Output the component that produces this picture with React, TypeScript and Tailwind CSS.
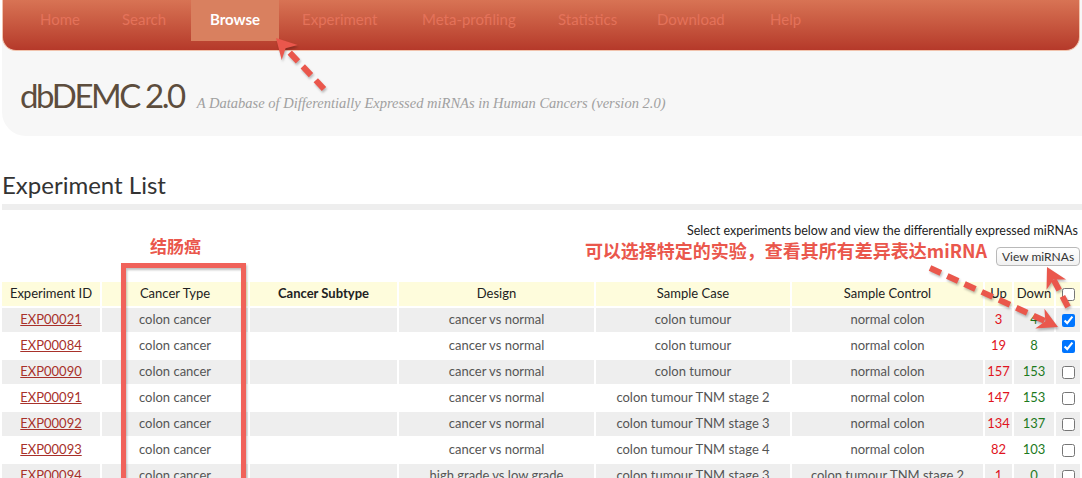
import React from "react";

type Row = {
  id: string;
  type: string;
  sub: string;
  design: string;
  sampleCase: string;
  control: string;
  up: string;
  down: string;
  checked: boolean;
};

const rows: Row[] = [
  { id: "EXP00021", type: "colon cancer", sub: "", design: "cancer vs normal", sampleCase: "colon tumour", control: "normal colon", up: "3", down: "4", checked: true },
  { id: "EXP00084", type: "colon cancer", sub: "", design: "cancer vs normal", sampleCase: "colon tumour", control: "normal colon", up: "19", down: "8", checked: true },
  { id: "EXP00090", type: "colon cancer", sub: "", design: "cancer vs normal", sampleCase: "colon tumour", control: "normal colon", up: "157", down: "153", checked: false },
  { id: "EXP00091", type: "colon cancer", sub: "", design: "cancer vs normal", sampleCase: "colon tumour TNM stage 2", control: "normal colon", up: "147", down: "153", checked: false },
  { id: "EXP00092", type: "colon cancer", sub: "", design: "cancer vs normal", sampleCase: "colon tumour TNM stage 3", control: "normal colon", up: "134", down: "137", checked: false },
  { id: "EXP00093", type: "colon cancer", sub: "", design: "cancer vs normal", sampleCase: "colon tumour TNM stage 4", control: "normal colon", up: "82", down: "103", checked: false },
  { id: "EXP00094", type: "colon cancer", sub: "", design: "high grade vs low grade", sampleCase: "colon tumour TNM stage 3", control: "colon tumour TNM stage 2", up: "1", down: "0", checked: false },
];

function Arrow({ x1, y1, x2, y2 }: { x1: number; y1: number; x2: number; y2: number }) {
  const dx = x2 - x1;
  const dy = y2 - y1;
  const len = Math.sqrt(dx * dx + dy * dy);
  const ux = dx / len;
  const uy = dy / len;
  const headLen = 20;
  const halfW = 11;
  const bx = x2 - ux * headLen;
  const by = y2 - uy * headLen;
  const px = -uy;
  const py = ux;
  const nx = x2 - ux * (headLen - 6);
  const ny = y2 - uy * (headLen - 6);
  const pts = `${x2},${y2} ${bx + px * halfW},${by + py * halfW} ${nx},${ny} ${bx - px * halfW},${by - py * halfW}`;
  return (
    <g>
      <line x1={x1} y1={y1} x2={nx} y2={ny} stroke="#ea574c" strokeWidth={6} strokeDasharray="12 7" />
      <polygon points={pts} fill="#ea574c" />
    </g>
  );
}

const navItems = [
  { label: "Home", w: "w-[82px]" },
  { label: "Search", w: "w-[69px]" },
];
const navItems2 = [
  { label: "Experiment", w: "w-[120px]" },
  { label: "Meta-profiling", w: "w-[136px]" },
  { label: "Statistics", w: "w-[99px]" },
  { label: "Download", w: "w-[113px]" },
  { label: "Help", w: "w-[60px]" },
];

export default function App() {
  return (
    <div className="relative w-[1082px] h-[478px] overflow-hidden bg-white font-['Lato','Liberation_Sans',sans-serif]">
      {/* header panel */}
      <div className="ml-[2px] h-[136px] bg-[#f7f7f7] rounded-bl-[24px]">
        <nav className="mr-[2px] h-[51px] rounded-b-[14px] border border-t-0 border-[#f1c3ad] bg-linear-to-b from-[#d87354] to-[#b5392a] flex items-start pl-[37px] text-[15px]">
          {navItems.map((n) => (
            <div key={n.label} className={`${n.w} h-[41px] pb-[3px] flex items-center text-[#e4725a]`}>
              {n.label}
            </div>
          ))}
          <div className="w-[88px] h-[41px] pb-[3px] flex items-center justify-center bg-[#d9805f] text-white font-bold">
            Browse
          </div>
          <div className="w-[23px]" />
          {navItems2.map((n) => (
            <div key={n.label} className={`${n.w} h-[41px] pb-[3px] flex items-center text-[#e4725a]`}>
              {n.label}
            </div>
          ))}
        </nav>
        <div className="flex items-baseline pl-[18px] pt-[28px]">
          <span className="text-[33px] leading-none text-[#5d4d3d] tracking-[-2.4px]">dbDEMC 2.0</span>
          <span className="ml-[13px] font-['Liberation_Serif',serif] italic text-[14.5px] text-[#a0a0a0]">
            A Database of Differentially Expressed miRNAs in Human Cancers (version 2.0)
          </span>
        </div>
      </div>

      {/* section title */}
      <h2 className="mt-[37px] ml-[2px] text-[24px] leading-none text-[#333]">Experiment List</h2>
      <div className="mt-[7px] ml-[2px] h-[6px] bg-[#eeeeee]" />

      <div className="h-[70px] pr-[2px] pt-[13px] flex flex-col items-end">
        <div className="text-[12.5px] leading-[16px] text-[#222] pr-[2px]">
          Select experiments below and view the differentially expressed miRNAs
        </div>
        <div className="flex items-start">
          <span className="mr-[9px] text-[18px] leading-[22px] font-bold text-[#ea574c] font-['Noto_Sans_CJK_SC','Noto_Sans',sans-serif]">
            可以选择特定的实验，查看其所有差异表达miRNA
          </span>
          <button className="mt-[8px] h-[19px] w-[84px] rounded-[4px] border border-[#b9b9b9] bg-linear-to-b from-white to-[#f1f1f1] text-[12px] leading-none text-[#333]">
            View miRNAs
          </button>
        </div>
      </div>

      <table className="border-separate border-spacing-[2px] w-[1082px] table-fixed text-[13px] text-[#555]">
        <colgroup>
          <col className="w-[98px]" />
          <col className="w-[146px]" />
          <col className="w-[147px]" />
          <col className="w-[195px]" />
          <col className="w-[194px]" />
          <col className="w-[191px]" />
          <col className="w-[27px]" />
          <col className="w-[40px]" />
          <col className="w-[24px]" />
        </colgroup>
        <thead>
          <tr className="h-[24px] bg-[#fefcdc] text-[#222]">
            <th className="font-normal p-0">Experiment ID</th>
            <th className="font-normal p-0">Cancer Type</th>
            <th className="font-bold p-0">Cancer Subtype</th>
            <th className="font-normal p-0">Design</th>
            <th className="font-normal p-0">Sample Case</th>
            <th className="font-normal p-0">Sample Control</th>
            <th className="font-normal p-0">Up</th>
            <th className="font-normal p-0">Down</th>
            <th className="font-normal p-0">
              <input type="checkbox" readOnly className="align-middle" />
            </th>
          </tr>
        </thead>
        <tbody>
          {rows.map((r, i) => (
            <tr key={r.id} className={`h-[24px] text-center ${i % 2 === 0 ? "bg-[#eeeeee]" : "bg-white"}`}>
              <td className="p-0">
                <a className="text-[#a8312a] underline">{r.id}</a>
              </td>
              <td className="p-0">{r.type}</td>
              <td className="p-0">{r.sub}</td>
              <td className="p-0">{r.design}</td>
              <td className="p-0">{r.sampleCase}</td>
              <td className="p-0">{r.control}</td>
              <td className="p-0 text-[#e0141e]">{r.up}</td>
              <td className="p-0 text-[#1d7a1d]">{r.down}</td>
              <td className="p-0">
                <input type="checkbox" readOnly checked={r.checked} className="align-middle" />
              </td>
            </tr>
          ))}
        </tbody>
      </table>

      {/* annotations */}
      <div className="absolute left-[150px] top-[235px] text-[17px] font-bold text-[#ea574c] font-['Noto_Sans_CJK_SC',sans-serif] leading-[22px]">
        结肠癌
      </div>
      <svg className="absolute left-0 top-0 pointer-events-none drop-shadow-[1px_2px_1px_rgba(0,0,0,0.25)]" width="1082" height="478">
        <rect x="123.5" y="265.5" width="120" height="240" fill="none" stroke="#f0625a" strokeWidth={5} />
        <Arrow x1={324} y1={89} x2={276} y2={38} />
        <Arrow x1={930} y1={268} x2={1058} y2={327} />
        <Arrow x1={1068} y1={307} x2={1047} y2={267} />
      </svg>
    </div>
  );
}
